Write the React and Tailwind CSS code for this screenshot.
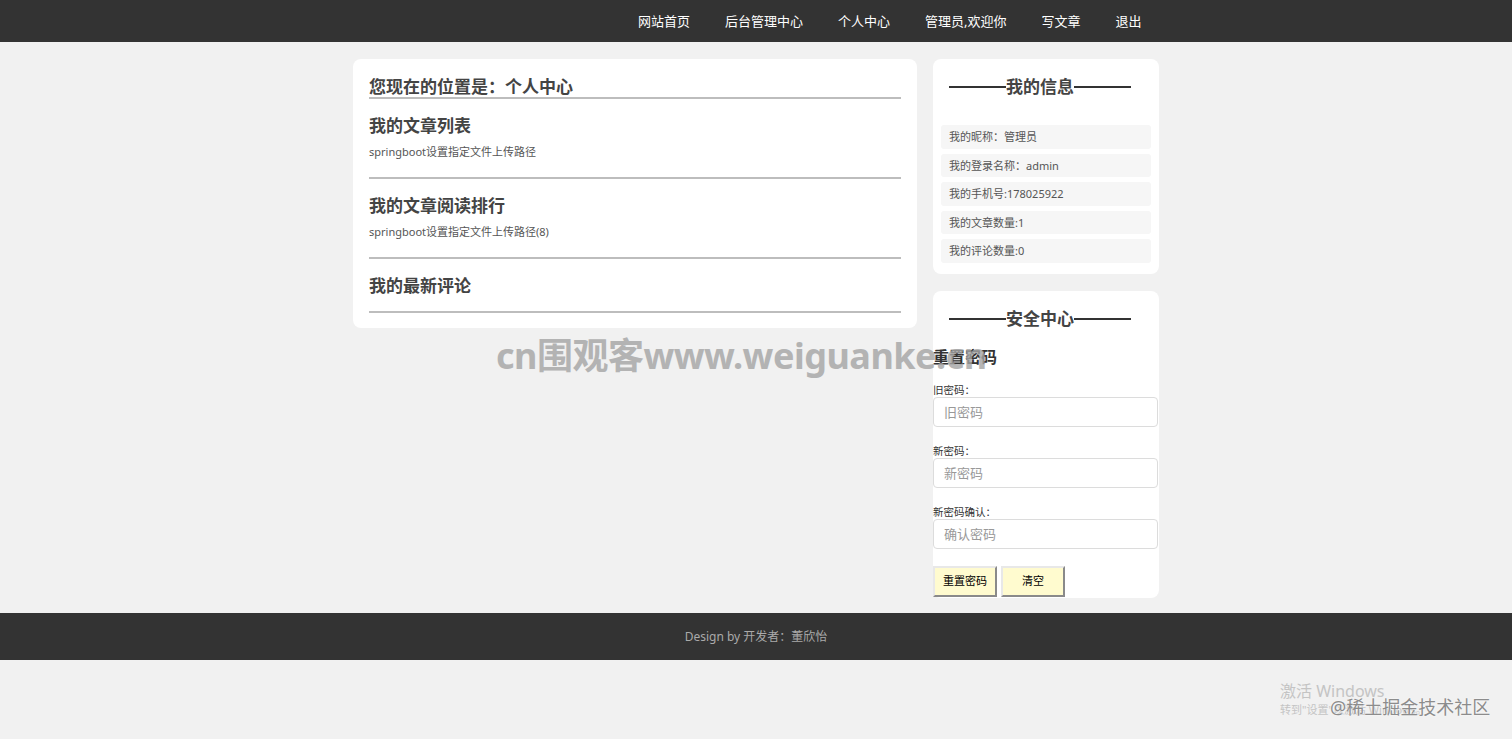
const navItems = ["网站首页", "后台管理中心", "个人中心", "管理员,欢迎你", "写文章", "退出"];

const myInfo = [
  "我的昵称：管理员",
  "我的登录名称：admin",
  "我的手机号:178025922",
  "我的文章数量:1",
  "我的评论数量:0",
];

const sections = [
  { title: "我的文章列表", text: "springboot设置指定文件上传路径" },
  { title: "我的文章阅读排行", text: "springboot设置指定文件上传路径(8)" },
  { title: "我的最新评论", text: null },
];

function CardTitle({ children }) {
  return (
    <div className="flex items-center pl-2 leading-[28px]">
      <span className="h-[2px] w-[57px] bg-[#333]" />
      <span className="text-[17px] font-bold text-[#444]">{children}</span>
      <span className="h-[2px] w-[57px] bg-[#333]" />
    </div>
  );
}

function Field({ label, placeholder, first }) {
  return (
    <div className={first ? "mt-[14px]" : "mt-[17px]"}>
      <div className="text-[10.5px] leading-[14px] text-[#333]">{label}</div>
      <input
        type="password"
        placeholder={placeholder}
        className="block h-[30px] w-[225px] rounded-[4px] border border-[#dcdcdc] bg-white pl-[10px] text-[13px] text-[#333] placeholder:text-[#999] outline-none"
      />
    </div>
  );
}

export default function App() {
  return (
    <div className="relative min-h-screen bg-[#f1f1f1] font-['Noto_Sans','Noto_Sans_CJK_SC',sans-serif]">
      <header className="h-[42px] bg-[#333]">
        <nav className="mx-auto flex w-[806px] justify-end">
          {navItems.map((item) => (
            <a key={item} className="px-[17.5px] text-[13px] leading-[42px] text-white">
              {item}
            </a>
          ))}
        </nav>
      </header>

      <main className="mx-auto flex w-[806px] items-start gap-4 pt-[17px]">
        <section className="w-[564px] rounded-[8px] bg-white px-4 pb-[15px] pt-[18px]">
          <h2 className="border-b-2 border-[#bdbdbd] text-[17px] font-bold leading-[20px] text-[#444]">
            您现在的位置是：个人中心
          </h2>
          {sections.map((s) => (
            <div key={s.title}>
              <h3 className="mt-[15px] text-[17px] font-bold leading-[24px] text-[#444]">{s.title}</h3>
              {s.text && (
                <p className="mt-[5px] text-[11px] leading-[18px] text-[#555]">{s.text}</p>
              )}
              <div className={(s.text ? "mt-[16px]" : "mt-[13px]") + " h-[2px] bg-[#bdbdbd]"} />
            </div>
          ))}
        </section>

        <aside className="flex w-[226px] flex-col gap-[17px]">
          <div className="rounded-[8px] bg-white px-2 pb-[11px] pt-[14px]">
            <CardTitle>我的信息</CardTitle>
            <ul className="mt-[24px] flex flex-col gap-[5px]">
              {myInfo.map((row) => (
                <li key={row} className="h-[23.5px] rounded-[3px] bg-[#f6f6f6] pl-2 text-[11px] leading-[23.5px] text-[#555]">
                  {row}
                </li>
              ))}
            </ul>
          </div>

          <div className="rounded-[8px] bg-white pb-px pt-[14px]">
            <div className="px-2">
              <CardTitle>安全中心</CardTitle>
            </div>
            <form className="mt-[12px]">
              <h4 className="text-[16px] font-bold leading-[24px] text-[#333]">重置密码</h4>
              <Field label="旧密码：" placeholder="旧密码" first />
              <Field label="新密码：" placeholder="新密码" />
              <Field label="新密码确认：" placeholder="确认密码" />
              <div className="mt-[17px] flex gap-[4px]">
                <button type="button" className="h-[31px] w-[64px] border-2 border-b-[#8a8a8a] border-l-[#e8e8e8] border-r-[#8a8a8a] border-t-[#e8e8e8] bg-[#fffbcf] text-[11px] text-black">
                  重置密码
                </button>
                <button type="reset" className="h-[31px] w-[64px] border-2 border-b-[#8a8a8a] border-l-[#e8e8e8] border-r-[#8a8a8a] border-t-[#e8e8e8] bg-[#fffbcf] text-[11px] text-black">
                  清空
                </button>
              </div>
            </form>
          </div>
        </aside>
      </main>

      <footer className="mt-[15px] h-[47px] bg-[#333] text-center text-[12px] leading-[47px] text-[#aaa]">
        Design by 开发者：董欣怡
      </footer>

      {/* watermarks over the screenshot */}
      <div className="pointer-events-none absolute left-[496px] top-[332px] text-[36px] font-bold leading-[48px] tracking-[-0.5px] text-[#a4a4a4] opacity-80">
        cn围观客www.weiguanke.cn
      </div>
      <div className="pointer-events-none absolute left-[1280px] top-[680px] text-[#c4c4c4]">
        <div className="text-[16px] leading-[22px]">激活 Windows</div>
        <div className="text-[11px] leading-[16px]">转到"设置"以激活 Windows。</div>
      </div>
      <div className="pointer-events-none absolute left-[1330px] top-[695px] text-[18px] leading-[24px] text-[#8c8c8c] [text-shadow:0_0_2px_#fff]">
        @稀土掘金技术社区
      </div>
    </div>
  );
}
